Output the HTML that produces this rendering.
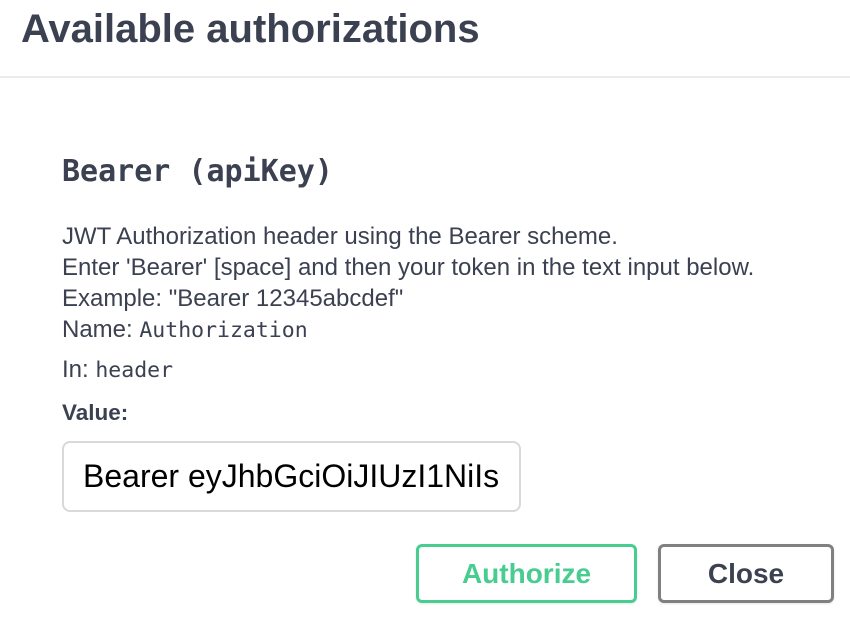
<!DOCTYPE html>
<html><head><style>
body{margin:0;width:850px;height:618px;background:#fff;font-family:"Liberation Sans",sans-serif;color:#3b4151;position:relative;overflow:hidden}
.a{position:absolute;white-space:nowrap}
.mono{font-family:"DejaVu Sans Mono","Liberation Mono",monospace}
</style></head><body>
<div class="a" style="left:21px;top:4px;font-size:40px;font-weight:bold;line-height:50px">Available authorizations</div>
<div class="a" style="left:0;top:76px;width:850px;height:2px;background:#ebebeb"></div>
<div class="a mono" style="left:62px;top:152px;font-size:30px;font-weight:bold;line-height:40px">Bearer (apiKey)</div>
<div class="a" style="left:62px;top:221px;font-size:24px;line-height:31px">JWT Authorization header using the Bearer scheme.<br>Enter 'Bearer' [space] and then your token in the text input below.<br>Example: "Bearer 12345abcdef"<br>Name: <span class="mono" style="font-size:21.5px">Authorization</span></div>
<div class="a" style="left:62px;top:354px;font-size:24px;line-height:31px">In: <span class="mono" style="font-size:21.5px">header</span></div>
<div class="a" style="left:62px;top:399px;font-size:22.5px;font-weight:bold;line-height:28px">Value:</div>
<div class="a" style="left:62px;top:441px;width:455px;height:67px;border:2px solid #d9d9d9;border-radius:8px"></div>
<div class="a" style="left:83px;top:456px;font-size:32px;line-height:40px;color:#000">Bearer eyJhbGciOiJIUzI1NiIs</div>
<div class="a" style="left:416px;top:544px;width:215px;height:53px;border:3px solid #49cc90;border-radius:6px;color:#49cc90;font-size:28px;font-weight:bold;text-align:center;line-height:53px;box-shadow:0 1px 2px rgba(0,0,0,.1)">Authorize</div>
<div class="a" style="left:658px;top:544px;width:170px;height:53px;border:3px solid #808080;border-radius:6px;font-size:28px;font-weight:bold;text-align:center;line-height:53px;box-shadow:0 1px 2px rgba(0,0,0,.1)">Close</div>
</body></html>
